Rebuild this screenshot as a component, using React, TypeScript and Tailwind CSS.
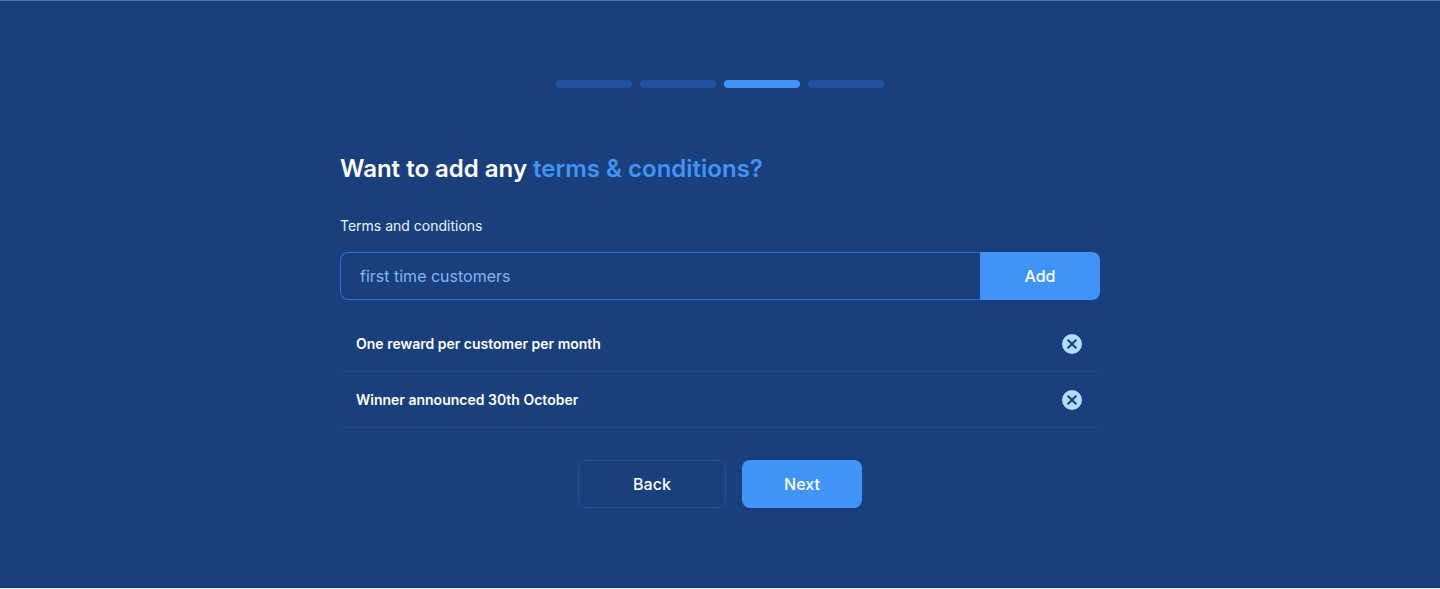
import { useState } from "react";
import type { FormEvent } from "react";

const TOTAL_STEPS = 4;
const CURRENT_STEP = 3;

function Steps() {
  return (
    <ol aria-label="Progress" className="flex gap-2">
      {Array.from({ length: TOTAL_STEPS }, (_, i) => (
        <li
          key={i}
          aria-current={i + 1 === CURRENT_STEP ? "step" : undefined}
          className={`h-2 w-19 rounded-full ${i + 1 === CURRENT_STEP ? "bg-[#4094f7]" : "bg-[#2251a0]"}`}
        />
      ))}
    </ol>
  );
}

function RemoveIcon() {
  return (
    <svg viewBox="0 0 20 20" className="size-5" aria-hidden="true">
      <circle cx="10" cy="10" r="10" fill="#b3dcff" />
      <path d="M6.2 6.2l7.6 7.6M13.8 6.2l-7.6 7.6" fill="none" stroke="#193f7c" strokeWidth="2" strokeLinecap="round" />
    </svg>
  );
}

export default function App() {
  const [terms, setTerms] = useState(["One reward per customer per month", "Winner announced 30th October"]);
  const [draft, setDraft] = useState("");

  const addTerm = (event: FormEvent) => {
    event.preventDefault();
    if (!draft.trim()) return;
    setTerms([...terms, draft.trim()]);
    setDraft("");
  };

  return (
    <div className="border-b border-[#dfe8f8] bg-[#193f7c] font-['Inter',sans-serif] text-white">
      <main className="flex flex-col items-center border-t border-[#4673b0] px-6 pt-[79px] pb-20">
        <Steps />
        <section className="mt-16 w-full max-w-[760px]">
          <h1 className="text-2xl leading-[34px] font-semibold">
            Want to add any <span className="text-[#4094f7]">terms &amp; conditions?</span>
          </h1>
          <form onSubmit={addTerm} className="mt-[30px]">
            <label htmlFor="term" className="block text-sm leading-5 text-[#e6f3ff]">
              Terms and conditions
            </label>
            <div className="mt-4 flex h-12">
              <input
                id="term"
                value={draft}
                onChange={(event) => setDraft(event.target.value)}
                placeholder="first time customers"
                className="min-w-0 flex-1 rounded-l-lg border border-r-0 border-[#3070cf] bg-transparent px-[19px] text-base outline-none placeholder:text-[#82b6f5]"
              />
              <button type="submit" className="w-30 rounded-r-lg bg-[#4094f7] text-base font-medium">
                Add
              </button>
            </div>
          </form>
          <ul className="mt-4">
            {terms.map((term, i) => (
              <li key={i} className="flex h-14 items-center justify-between border-b border-[#234a88] pr-[18px] pl-4">
                <span className="text-sm font-semibold">{term}</span>
                <button
                  type="button"
                  aria-label={`Remove ${term}`}
                  onClick={() => setTerms(terms.filter((_, j) => j !== i))}
                >
                  <RemoveIcon />
                </button>
              </li>
            ))}
          </ul>
          <div className="mt-8 flex justify-center gap-4">
            <button type="button" className="h-12 w-[148px] rounded-lg border border-[#224f99] text-base font-medium">
              Back
            </button>
            <button type="button" className="h-12 w-30 rounded-lg bg-[#4094f7] text-base font-medium">
              Next
            </button>
          </div>
        </section>
      </main>
    </div>
  );
}
